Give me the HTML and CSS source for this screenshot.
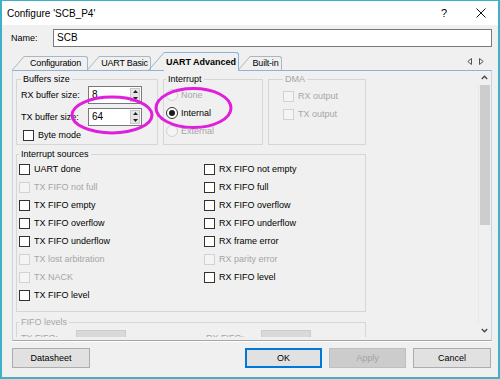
FILE: index.html
```html
<!DOCTYPE html>
<html lang="en">
<head>
    <meta charset="UTF-8">
    <meta name="viewport" content="width=device-width, initial-scale=1.0">
    <title>Configure 'SCB_P4'</title>
    <link rel="stylesheet" href="styles.css">
</head>
<body>
    <div class="window">
        <div class="titlebar">
            <span class="title">Configure 'SCB_P4'</span>
            <span class="help">?</span>
            <svg class="close" width="10" height="10" viewBox="0 0 10 10"><path d="M0.5 0.5L9.5 9.5M9.5 0.5L0.5 9.5" stroke="#111" stroke-width="1"/></svg>
        </div>

        <div class="dialog">
            <div class="name-row">
                <span class="name-label">Name:</span>
                <div class="textbox">SCB</div>
            </div>

            <div class="tabbar">
                <div class="tab tab-config">Configuration</div>
                <div class="tab tab-basic">UART Basic</div>
                <div class="tab tab-advanced active">UART Advanced</div>
                <div class="tab tab-builtin">Built-in</div>
                <svg class="tab-arrows" width="17" height="7" viewBox="0 0 17 7"><path d="M4.5 0.5L0.8 3.5L4.5 6.5Z M12.5 0.5L16.2 3.5L12.5 6.5Z" fill="none" stroke="#555" stroke-width="1"/></svg>
            </div>

            <div class="panel">
                <div class="page">
                    <div class="top-groups">
                        <fieldset class="group buffers">
                            <legend>Buffers size</legend>
                            <div class="field-row">
                                <span class="field-label">RX buffer size:</span>
                                <div class="spinbox"><span class="spin-value">8</span><span class="spin-btns"><svg width="7" height="14" viewBox="0 0 7 14"><path d="M3.5 2L6 5H1Z M1 9H6L3.5 12Z" fill="#222"/></svg></span></div>
                            </div>
                            <div class="field-row">
                                <span class="field-label">TX buffer size:</span>
                                <div class="spinbox"><span class="spin-value">64</span><span class="spin-btns"><svg width="7" height="14" viewBox="0 0 7 14"><path d="M3.5 2L6 5H1Z M1 9H6L3.5 12Z" fill="#222"/></svg></span></div>
                            </div>
                            <label class="check byte-mode"><span class="box"></span>Byte mode</label>
                        </fieldset>

                        <fieldset class="group interrupt">
                            <legend>Interrupt</legend>
                            <label class="radio disabled"><span class="circle"></span>None</label>
                            <label class="radio checked"><span class="circle"></span>Internal</label>
                            <label class="radio disabled"><span class="circle"></span>External</label>
                        </fieldset>

                        <fieldset class="group dma disabled">
                            <legend>DMA</legend>
                            <label class="check disabled"><span class="box"></span>RX output</label>
                            <label class="check disabled"><span class="box"></span>TX output</label>
                        </fieldset>
                    </div>

                    <fieldset class="group sources">
                        <legend>Interrupt sources</legend>
                        <div class="source-grid">
                            <label class="check"><span class="box"></span>UART done</label>
                            <label class="check disabled"><span class="box"></span>TX FIFO not full</label>
                            <label class="check"><span class="box"></span>TX FIFO empty</label>
                            <label class="check"><span class="box"></span>TX FIFO overflow</label>
                            <label class="check"><span class="box"></span>TX FIFO underflow</label>
                            <label class="check disabled"><span class="box"></span>TX lost arbitration</label>
                            <label class="check disabled"><span class="box"></span>TX NACK</label>
                            <label class="check"><span class="box"></span>TX FIFO level</label>
                            <label class="check"><span class="box"></span>RX FIFO not empty</label>
                            <label class="check"><span class="box"></span>RX FIFO full</label>
                            <label class="check"><span class="box"></span>RX FIFO overflow</label>
                            <label class="check"><span class="box"></span>RX FIFO underflow</label>
                            <label class="check"><span class="box"></span>RX frame error</label>
                            <label class="check disabled"><span class="box"></span>RX parity error</label>
                            <label class="check"><span class="box"></span>RX FIFO level</label>
                        </div>
                    </fieldset>

                    <fieldset class="group fifo disabled">
                        <legend>FIFO levels</legend>
                        <div class="fifo-grid">
                            <div class="fifo-field"><span class="fifo-label">TX FIFO:</span><span class="fifo-box"></span></div>
                            <div class="fifo-field"><span class="fifo-label">RX FIFO:</span><span class="fifo-box"></span></div>
                        </div>
                    </fieldset>
                </div>

                <div class="scrollbar">
                    <div class="sb-btn"><svg width="7" height="5" viewBox="0 0 7 5"><path d="M0.8 4L3.5 1.2L6.2 4" fill="none" stroke="#444" stroke-width="1.3"/></svg></div>
                    <div class="sb-track"><div class="sb-thumb"></div></div>
                    <div class="sb-btn"><svg width="7" height="5" viewBox="0 0 7 5"><path d="M0.8 1L3.5 3.8L6.2 1" fill="none" stroke="#444" stroke-width="1.3"/></svg></div>
                </div>
            </div>

            <div class="footer">
                <button class="btn">Datasheet</button>
                <button class="btn ok">OK</button>
                <button class="btn" disabled>Apply</button>
                <button class="btn">Cancel</button>
            </div>
        </div>
    </div>

    <svg class="marks" width="500" height="379" viewBox="0 0 500 379">
        <ellipse cx="112" cy="115" rx="40" ry="18" fill="none" stroke="#e01fdc" stroke-width="3"/>
        <ellipse cx="193.5" cy="108" rx="37.5" ry="19.5" fill="none" stroke="#e01fdc" stroke-width="3"/>
    </svg>
</body>
</html>
```

FILE: styles.css
```css
* {
    box-sizing: border-box;
}
body {
    margin: 0;
    font-family: "Liberation Sans", Arial, sans-serif;
    font-size: 9px;
    color: #000;
    background: #f0f0f0;
}
.window {
    width: 500px;
    height: 379px;
    border: 2px solid #3fb1c6;
    border-top-width: 1px;
    background: #f0f0f0;
    display: flex;
    flex-direction: column;
}
.titlebar {
    height: 24px;
    flex: none;
    background: #fff;
    display: flex;
    align-items: center;
    padding-left: 5px;
    font-size: 10px;
}
.title {
    flex: 1;
}
.help {
    font-size: 11px;
    margin-right: 29px;
}
.close {
    margin-right: 12px;
}
.dialog {
    flex: 1;
    display: flex;
    flex-direction: column;
    padding: 4px 6px 8px 10px;
}
.name-row {
    display: flex;
    align-items: center;
    height: 18px;
}
.name-label {
    width: 42px;
    margin-left: -1px;
    padding-right: 1px;
}
.textbox {
    flex: 1;
    height: 18px;
    background: #fff;
    border: 1px solid #7a7a7a;
    padding: 0 3px;
    line-height: 16px;
    font-size: 10px;
}

/* tabs with slanted left edge */
.tabbar {
    position: relative;
    z-index: 1;
    height: 18px;
    margin-top: 5px;
    display: flex;
    align-items: flex-end;
}
.tab {
    position: relative;
    height: 14px;
    line-height: 13px;
    margin-left: 11px;
    display: flex;
    justify-content: center;
    white-space: nowrap;
    letter-spacing: -0.2px;
    border-top: 1px solid #a9b6c4;
    border-right: 1px solid #a9b6c4;
    border-top-right-radius: 3px;
    background: #f0f0f0;
}
.tab::before {
    content: "";
    position: absolute;
    top: -1px;
    bottom: 0;
    left: 0;
    border-left: 1px solid #a9b6c4;
    transform-origin: top left;
    transform: skewX(-41deg);
}
.tab-config {
    width: 64px;
    margin-left: 12px;
}
.tab-basic {
    width: 52px;
}
.tab-advanced {
    width: 75px;
}
.tab-builtin {
    width: 32px;
}
.tab.active {
    height: 19px;
    line-height: 18px;
    margin-bottom: -1px;
    margin-left: 13px;
    letter-spacing: 0;
    font-weight: bold;
    border-color: #8fb3d6;
    z-index: 2;
}
.tab.active::before {
    border-color: #8fb3d6;
}
.tab-arrows {
    margin-left: auto;
    margin-right: 8px;
    margin-bottom: 5px;
}

.panel {
    height: 271px;
    flex: none;
    display: flex;
    border: 1px solid #c4d5e6;
    border-top-color: #8fb3d6;
    border-bottom-color: #a5a5a5;
    box-shadow: 0 1px 0 #fff;
}
.page {
    flex: 1;
    height: 266px;
    overflow: hidden;
    padding: 3px 0 0 3px;
    display: flex;
    flex-direction: column;
    align-items: flex-start;
}
.top-groups {
    display: flex;
    gap: 5px;
}
.group {
    margin: 0;
    min-width: 0;
    border: 1px solid #d6d6d6;
    padding: 0 2px;
}
.group legend {
    padding: 0 2px;
    line-height: 11px;
}
.group.disabled legend,
.disabled {
    color: #a6a6a6;
}
.buffers {
    width: 142px;
    padding-top: 1px;
    padding-left: 4px;
}
.interrupt {
    width: 100px;
    padding-top: 1px;
    padding-bottom: 4px;
}
.dma {
    width: 98px;
    padding-top: 2px;
    padding-left: 14px;
}
.field-row {
    display: flex;
    align-items: center;
    height: 18px;
    margin-bottom: 4px;
}
.field-label {
    width: 67px;
}
.spinbox {
    width: 54px;
    height: 18px;
    display: flex;
    background: #fff;
    border: 1px solid #7a7a7a;
}
.spin-value {
    flex: 1;
    padding-left: 3px;
    line-height: 16px;
    font-size: 10px;
}
.spin-btns {
    width: 10px;
    margin: 1px 1px 1px 0;
    display: flex;
    align-items: center;
    justify-content: center;
    background: #e6e6e6;
    border: 1px solid #c8c8c8;
}
.check,
.radio {
    display: flex;
    align-items: center;
    height: 18px;
    white-space: nowrap;
}
.byte-mode {
    height: 14px;
    margin-left: 2px;
    margin-top: -2px;
}
.box {
    width: 11px;
    height: 11px;
    margin-right: 4px;
    flex: none;
    background: #fff;
    border: 1px solid #333;
}
.check.disabled .box {
    background: #f4f4f4;
    border-color: #d2d2d2;
}
.circle {
    width: 12px;
    height: 12px;
    margin-right: 3px;
    flex: none;
    border: 1px solid #333;
    border-radius: 50%;
    background: #fff;
    display: flex;
    align-items: center;
    justify-content: center;
}
.radio.disabled .circle {
    border-color: #d2d2d2;
    background: #f4f4f4;
}
.radio.checked .circle::after {
    content: "";
    width: 6px;
    height: 6px;
    border-radius: 50%;
    background: #1a1a1a;
}
.sources {
    width: 350px;
    margin-top: 4px;
    padding-bottom: 7px;
}
.source-grid {
    display: grid;
    grid-template-columns: 185px 1fr;
    grid-template-rows: repeat(8, 18px);
    grid-auto-flow: column;
}
.fifo {
    width: 350px;
    margin-top: 5px;
    padding-top: 2px;
}
.fifo-grid {
    display: grid;
    grid-template-columns: 185px 1fr;
}
.fifo-field {
    display: flex;
    align-items: center;
    height: 16px;
    padding-left: 2px;
}
.fifo-label {
    width: 55px;
}
.fifo-box {
    width: 50px;
    height: 16px;
    background: #d9d9d9;
    border: 1px solid #cccccc;
}
.scrollbar {
    width: 13px;
    height: 266px;
    display: flex;
    flex-direction: column;
    background: #f0f0f0;
}
.sb-btn {
    height: 13px;
    display: flex;
    align-items: center;
    justify-content: center;
}
.sb-track {
    flex: 1;
    padding: 1px 1px 0;
    border-left: 1px solid #e8e8e8;
}
.sb-thumb {
    height: 140px;
    background: #cdcdcd;
}
.footer {
    display: flex;
    gap: 7px;
    margin-top: 7px;
    padding-right: 1px;
}
.btn {
    width: 78px;
    height: 20px;
    padding: 0;
    font-family: inherit;
    font-size: 9px;
    color: #000;
    background: #e1e1e1;
    border: 1px solid #adadad;
}
.btn.ok {
    width: 77px;
    margin-left: auto;
    border-color: #0078d7;
    box-shadow: inset 0 0 0 1px #0078d7;
}
.btn:disabled {
    width: 77px;
    color: #a3a3a3;
    background: #cccccc;
    border-color: #bfbfbf;
}
.marks {
    position: absolute;
    top: 0;
    left: 0;
    pointer-events: none;
}
```
